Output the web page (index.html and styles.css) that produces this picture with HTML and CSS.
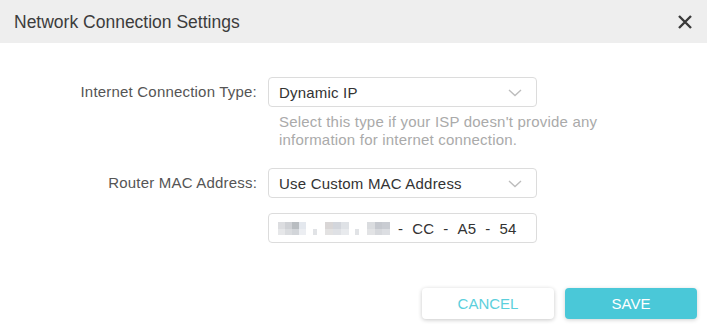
FILE: index.html
```html
<!DOCTYPE html>
<html>
<head>
<meta charset="utf-8">
<link rel="stylesheet" href="styles.css">
</head>
<body>
<div class="dialog">
  <div class="header">
    <span class="title">Network Connection Settings</span>
    <svg class="close" width="14" height="14" viewBox="0 0 14 14"><path d="M1 1L13 13M13 1L1 13" stroke="#3a3a3a" stroke-width="2.4" fill="none"/></svg>
  </div>
  <div class="form">
    <div class="row">
      <div class="label">Internet Connection Type:</div>
      <div class="control">
        <div class="select"><span>Dynamic IP</span>
          <svg class="chev" width="14" height="8" viewBox="0 0 14 8"><path d="M1 1L7 6.5L13 1" stroke="#bdbdbd" stroke-width="1.4" fill="none"/></svg>
        </div>
        <div class="help">Select this type if your ISP doesn't provide any information for internet connection.</div>
      </div>
    </div>
    <div class="row row2">
      <div class="label">Router MAC Address:</div>
      <div class="control">
        <div class="select"><span>Use Custom MAC Address</span>
          <svg class="chev" width="14" height="8" viewBox="0 0 14 8"><path d="M1 1L7 6.5L13 1" stroke="#bdbdbd" stroke-width="1.4" fill="none"/></svg>
        </div>
        <div class="mac">
          <span class="blur g1"><i style="background:#dcdde0"></i><i style="background:#cfd1d5"></i><i style="background:#b9bdc1"></i><i style="background:#e4e8ee"></i><i style="background:#e6e7e9"></i><i style="background:#dadcdf"></i><i style="background:#d2d5d9"></i><i style="background:#eceef2"></i></span>
          <span class="dot"></span>
          <span class="blur g2"><i style="background:#d9d6d6"></i><i style="background:#d3d6dc"></i><i style="background:#dfe2e6"></i><i style="background:#e3e2e2"></i><i style="background:#dfe1e5"></i><i style="background:#e8eaed"></i></span>
          <span class="dot"></span>
          <span class="blur g3"><i style="background:#dadcdf"></i><i style="background:#c5c8ce"></i><i style="background:#c9ccd2"></i><i style="background:#e2e3e5"></i><i style="background:#d6d8dc"></i><i style="background:#dcdee2"></i></span>
          <span class="sep">-</span><span>CC</span><span class="sep">-</span><span>A5</span><span class="sep">-</span><span>54</span>
        </div>
      </div>
    </div>
  </div>
  <div class="footer">
    <button class="btn cancel">CANCEL</button>
    <button class="btn save">SAVE</button>
  </div>
</div>
</body>
</html>
```
FILE: styles.css
```css
html, body {
  margin: 0;
  padding: 0;
  background: #fff;
}
body {
  width: 707px;
  height: 329px;
  overflow: hidden;
  font-family: "Liberation Sans", Arial, sans-serif;
}
.dialog {
  display: flex;
  flex-direction: column;
}
.header {
  height: 43px;
  background: #eeeeee;
  display: flex;
  align-items: center;
  justify-content: space-between;
  padding: 0 15px 0 14px;
}
.title {
  font-size: 17.5px;
  color: #3c3c3c;
  padding-top: 1px;
}
.close {
  display: block;
}
.form {
  padding-top: 34px;
  display: flex;
  flex-direction: column;
}
.row {
  display: flex;
  gap: 11px;
}
.row2 {
  margin-top: 19px;
}
.label {
  width: 257px;
  text-align: right;
  font-size: 15px;
  letter-spacing: 0.2px;
  color: #555;
  line-height: 30px;
}
.control {
  width: 269px;
  display: flex;
  flex-direction: column;
}
.select, .mac {
  box-sizing: border-box;
  height: 30px;
  border: 1px solid #dcdcdc;
  border-radius: 4px;
  display: flex;
  align-items: center;
  padding: 0 14px 0 10px;
  font-size: 15px;
  letter-spacing: 0.2px;
  color: #333;
}
.select {
  justify-content: space-between;
}
.chev {
  display: block;
  margin-top: 1px;
}
.help {
  font-size: 15px;
  letter-spacing: 0.2px;
  color: #aaa;
  line-height: 18px;
  padding: 6px 0 0 11px;
  width: 360px;
}
.mac {
  margin-top: 15px;
  padding-left: 9px;
}
.blur {
  display: grid;
  grid-template-rows: 7px 6px;
  grid-auto-flow: row;
  height: 13px;
  margin-top: 1px;
}
.g1 { grid-template-columns: repeat(4, 7px); }
.g2 { grid-template-columns: repeat(3, 8px); }
.g3 { grid-template-columns: repeat(3, 7.7px); }
.blur i {
  display: block;
}
.dot {
  width: 4px;
  height: 6px;
  background: #e1e3e6;
  margin: 8px 8px 0 7px;
}
.g2 + .dot {
  margin-left: 6px;
}
.sep {
  margin: 0 9px;
}
.g3 + .sep {
  margin-left: 8px;
}
.footer {
  display: flex;
  justify-content: flex-end;
  gap: 11px;
  padding: 45px 10px 0 0;
}
.btn {
  width: 132px;
  height: 31px;
  border: none;
  border-radius: 4px;
  font-family: "Liberation Sans", Arial, sans-serif;
  font-size: 15px;
  padding: 0;
  cursor: pointer;
}
.cancel {
  background: #fff;
  color: #5ccfdc;
  box-shadow: 0 1px 4px rgba(0,0,0,0.22);
}
.save {
  background: #4ac8d8;
  color: #fff;
  box-shadow: 0 1px 4px rgba(0,0,0,0.18);
}
```
